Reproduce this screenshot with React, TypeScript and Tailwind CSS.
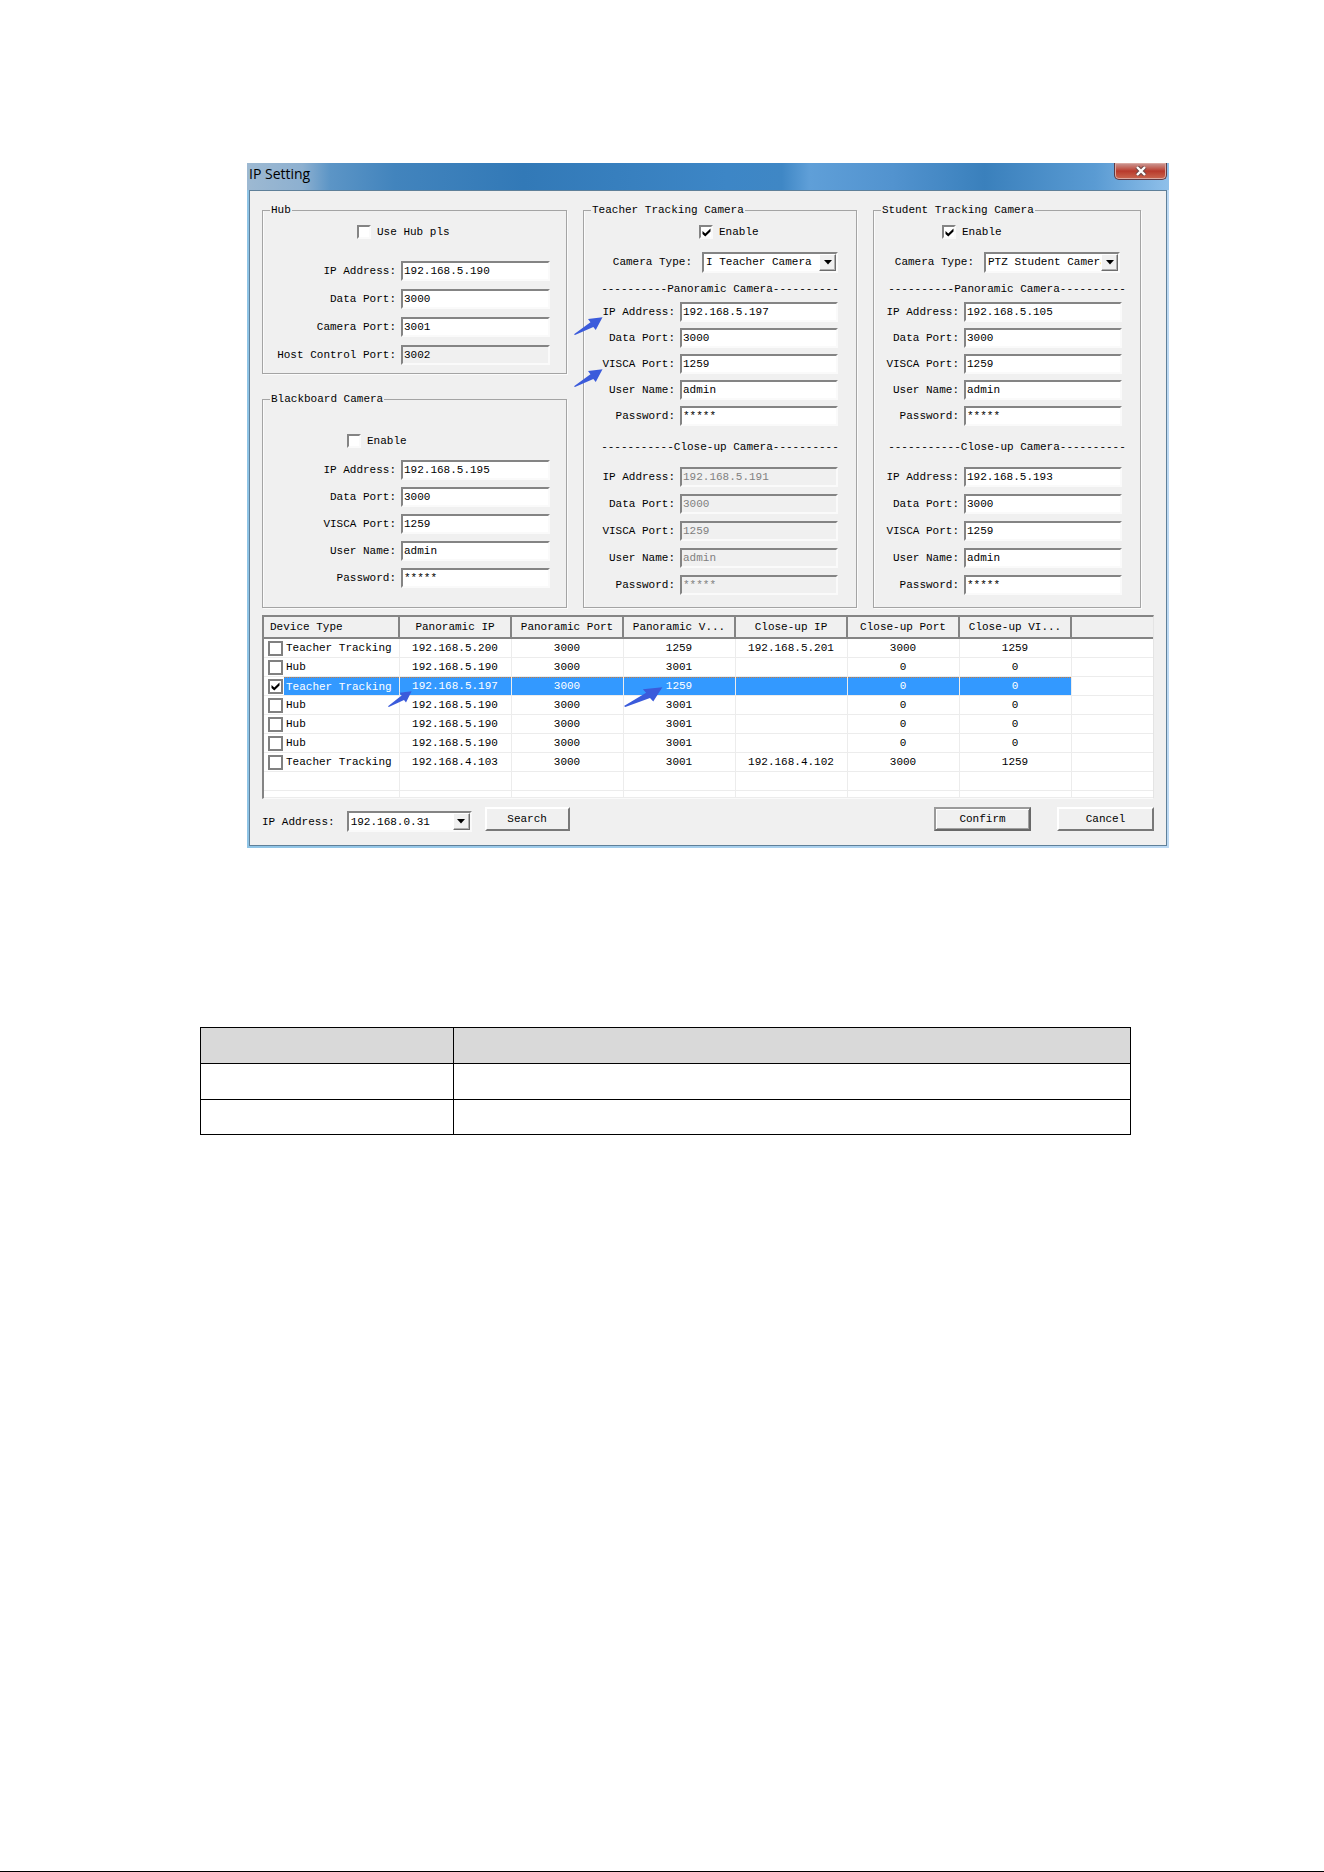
import React, { useId } from 'react';
import { clsx } from 'clsx';

interface Field {
  label: string;
  value: string;
  disabled?: boolean;
  readOnly?: boolean;
  arrow?: boolean;
}

interface Device {
  type: string;
  cells: string[];
  checked?: boolean;
}

const HUB_FIELDS: Field[] = [
  { label: 'IP Address:', value: '192.168.5.190' },
  { label: 'Data Port:', value: '3000' },
  { label: 'Camera Port:', value: '3001' },
  { label: 'Host Control Port:', value: '3002', readOnly: true },
];

// Every camera shares the same five fields
const cameraFields = (ip: string, disabled = false, arrows = false): Field[] => [
  { label: 'IP Address:', value: ip, disabled, arrow: arrows },
  { label: 'Data Port:', value: '3000', disabled },
  { label: 'VISCA Port:', value: '1259', disabled, arrow: arrows },
  { label: 'User Name:', value: 'admin', disabled },
  { label: 'Password:', value: '*****', disabled },
];

const COLUMNS = [
  'Panoramic IP',
  'Panoramic Port',
  'Panoramic V...',
  'Close-up IP',
  'Close-up Port',
  'Close-up VI...',
];

const DEVICES: Device[] = [
  { type: 'Teacher Tracking', cells: ['192.168.5.200', '3000', '1259', '192.168.5.201', '3000', '1259'] },
  { type: 'Hub', cells: ['192.168.5.190', '3000', '3001', '', '0', '0'] },
  { type: 'Teacher Tracking', cells: ['192.168.5.197', '3000', '1259', '', '0', '0'], checked: true },
  { type: 'Hub', cells: ['192.168.5.190', '3000', '3001', '', '0', '0'] },
  { type: 'Hub', cells: ['192.168.5.190', '3000', '3001', '', '0', '0'] },
  { type: 'Hub', cells: ['192.168.5.190', '3000', '3001', '', '0', '0'] },
  { type: 'Teacher Tracking', cells: ['192.168.4.103', '3000', '3001', '192.168.4.102', '3000', '1259'] },
];

const SUNKEN = 'border-2 border-t-[#848484] border-l-[#848484] border-r-[#fafafa] border-b-[#fafafa]';

const Arrow: React.FC<{ className: string }> = ({ className }) => (
  <svg viewBox="0 0 30 18" preserveAspectRatio="none" className={clsx('absolute z-10 pointer-events-none', className)}>
    <path d="M0 17.2 L17 5.2 L14.5 2 L29.5 0.3 L22.5 13 L20 10 L1 18 Z" fill="#3b5bdb" />
  </svg>
);

const CheckMark = () => (
  <svg viewBox="0 0 9 9" className="absolute inset-0 m-auto w-[9px] h-[9px] pointer-events-none">
    <path d="M0.5 3 L3.3 5.6 L8.5 0.6 V3.6 L3.3 8.6 L0.5 6 Z" fill="#000" />
  </svg>
);

const CheckRow: React.FC<{ label: string; checked?: boolean; className: string }> = ({ label, checked, className }) => (
  <label className={clsx('flex items-center gap-[6px] h-[14px]', className)}>
    <span className="relative w-[14px] h-[14px]">
      <input
        type="checkbox"
        defaultChecked={checked}
        className={clsx('block appearance-none w-[14px] h-[14px] bg-white', SUNKEN)}
      />
      {checked && <CheckMark />}
    </span>
    {label}
  </label>
);

const FieldList: React.FC<{ fields: Field[]; inputClass: string; className: string }> = ({
  fields,
  inputClass,
  className,
}) => {
  const id = useId();
  return (
    <div className={clsx('flex flex-col', className)}>
      {fields.map((field, i) => (
        <div key={field.label} className="flex items-center justify-end gap-[5px] h-5">
          <label htmlFor={`${id}-${i}`}>{field.label}</label>
          <div className="relative">
            <input
              id={`${id}-${i}`}
              type="text"
              defaultValue={field.value}
              disabled={field.disabled}
              readOnly={field.readOnly}
              className={clsx(
                'block h-5 px-px',
                SUNKEN,
                inputClass,
                field.disabled || field.readOnly ? 'bg-[#f0f0f0]' : 'bg-white',
                field.disabled ? 'text-[#808080]' : 'text-black'
              )}
            />
            {field.arrow && <Arrow className="right-[235px] top-[15px] w-[29px] h-[18px]" />}
          </div>
        </div>
      ))}
    </div>
  );
};

const Combo: React.FC<{ id: string; value: string; className: string }> = ({ id, value, className }) => (
  <div className={clsx('relative h-[21px]', className)}>
    <select id={id} className={clsx('block appearance-none w-full h-full pl-[2px] pr-[17px] bg-white', SUNKEN)}>
      <option>{value}</option>
    </select>
    <span className="absolute right-[2px] top-[2px] bottom-[2px] w-[17px] flex items-center justify-center bg-[#f0f0f0] border border-t-[#fff] border-l-[#fff] border-r-[#6d6d6d] border-b-[#6d6d6d] shadow-[inset_-1px_-1px_0_#b0b0b0] pointer-events-none">
      <svg viewBox="0 0 8 5" className="w-2 h-[5px]">
        <path d="M0 0 H8 L4 4.5 Z" fill="#000" />
      </svg>
    </span>
  </div>
);

const Group: React.FC<{ title: string; className?: string; children: React.ReactNode }> = ({
  title,
  className,
  children,
}) => (
  <fieldset
    className={clsx(
      'min-w-0 border border-[#a4a4a4] shadow-[1px_1px_0_#fbfbfb,inset_1px_0_0_#fbfbfb]',
      className
    )}
  >
    <legend className="ml-[7px] px-px leading-[14px] bg-[#f0f0f0]">{title}</legend>
    {children}
  </fieldset>
);

const TrackingCamera: React.FC<{
  title: string;
  type: string;
  checkClass: string;
  comboClass: string;
  panoramic: Field[];
  closeUp: Field[];
}> = ({ title, type, checkClass, comboClass, panoramic, closeUp }) => {
  const id = useId();
  return (
    <Group title={title} className="pt-2 pb-3">
      <CheckRow label="Enable" checked className={checkClass} />
      <div className={clsx('flex items-center justify-end gap-[10px] h-5 mt-[13px]', comboClass)}>
        <label htmlFor={id}>Camera Type:</label>
        <Combo id={id} value={type} className="w-[136px]" />
      </div>
      <div className="mt-[10px] text-center whitespace-nowrap">----------Panoramic Camera----------</div>
      <FieldList fields={panoramic} inputClass="w-[158px]" className="gap-[6px] mt-[6px] pr-[18px]" />
      <div className="mt-[14px] text-center whitespace-nowrap">-----------Close-up Camera----------</div>
      <FieldList fields={closeUp} inputClass="w-[158px]" className="gap-[7px] mt-[13px] pr-[18px]" />
    </Group>
  );
};

const DeviceTable = () => (
  <div className="mt-[7px] bg-white border-t-2 border-l-2 border-t-[#848484] border-l-[#848484] border-b border-r border-b-[#fafafa] border-r-[#e4e4e4]">
    <table className="w-full table-fixed border-collapse">
      <colgroup>
        <col className="w-[135px]" />
        {COLUMNS.map(column => (
          <col key={column} className="w-[112px]" />
        ))}
        <col />
      </colgroup>
      <thead>
        <tr className="h-[21px] bg-[#f0f0f0]">
          <th className="border-r-2 border-b-2 border-[#848484] pl-[6px] font-normal text-left">Device Type</th>
          {COLUMNS.map(column => (
            <th key={column} className="border-r-2 border-b-2 border-[#848484] font-normal text-center">
              {column}
            </th>
          ))}
          <th className="border-b-2 border-[#848484]" />
        </tr>
      </thead>
      <tbody>
        {DEVICES.map((device, row) => (
          <tr
            key={row}
            className={clsx('h-[19px] border-b border-[#ececec]', device.checked && 'text-white')}
          >
            <td className="border-r border-[#ececec]">
              <div className="flex items-center h-[18px] pl-1">
                <span className="relative w-[15px] h-[15px] shrink-0">
                  <input
                    type="checkbox"
                    aria-label={device.type}
                    defaultChecked={device.checked}
                    className="block appearance-none w-[15px] h-[15px] bg-white border-2 border-[#808080]"
                  />
                  {device.checked && <CheckMark />}
                </span>
                <span
                  className={clsx(
                    'flex items-center flex-1 h-full ml-px pl-[2px] whitespace-nowrap',
                    device.checked && 'bg-[#3399ff] border-t border-dotted border-[#c87a3a]'
                  )}
                >
                  {device.type}
                </span>
              </div>
            </td>
            {device.cells.map((cell, i) => (
              <td
                key={i}
                className={clsx(
                  'relative border-r border-[#ececec] text-center',
                  device.checked && 'bg-[#3399ff]'
                )}
              >
                {device.checked && (
                  <span className="absolute inset-x-0 top-0 border-t border-dotted border-[#c87a3a]" />
                )}
                {cell}
                {device.checked && i === 0 && <Arrow className="left-[-12px] top-[14px] w-6 h-4" />}
                {device.checked && i === 2 && <Arrow className="left-0 top-[10px] w-[39px] h-5" />}
              </td>
            ))}
            <td />
          </tr>
        ))}
        {['h-[19px]', 'h-[7px]'].map(height => (
          <tr key={height} className={clsx('border-b border-[#ececec]', height)}>
            <td className="border-r border-[#ececec]" />
            {COLUMNS.map(column => (
              <td key={column} className="border-r border-[#ececec]" />
            ))}
            <td />
          </tr>
        ))}
      </tbody>
    </table>
  </div>
);

const Footer = () => (
  <div className="flex items-start mt-2 h-[25px]">
    <div className="flex items-center gap-3 pt-1">
      <label htmlFor="host-ip">IP Address:</label>
      <Combo id="host-ip" value="192.168.0.31" className="w-[125px]" />
    </div>
    <button className="ml-[13px] w-[85px] h-6 pb-px bg-[#f0f0f0] border-2 border-t-[#fff] border-l-[#fff] border-r-[#787878] border-b-[#787878]">
      Search
    </button>
    <button className="ml-auto w-[97px] h-6 pb-px bg-[#f0f0f0] border-2 border-t-[#9a9a9a] border-l-[#9a9a9a] border-r-[#686868] border-b-[#686868] shadow-[inset_1px_1px_0_#fff,inset_-1px_-1px_0_#a0a0a0]">
      Confirm
    </button>
    <button className="ml-[26px] w-[97px] h-6 pb-px bg-[#f0f0f0] border-2 border-t-[#fff] border-l-[#fff] border-r-[#787878] border-b-[#787878]">
      Cancel
    </button>
  </div>
);

const IpSettingDialog = () => (
  <section className="bg-gradient-to-r from-[#8fc4e6] to-[#bcd9f3] px-[2px] pb-[2px] font-['Liberation_Mono',monospace] text-[11px] leading-[14px] text-black">
    {/* Title bar */}
    <header className="-mx-[2px] h-[27px] flex items-start justify-between bg-[linear-gradient(90deg,#9db9d2_0%,#8db0d0_6%,#5c95c6_9%,#4284bd_16%,#3279b7_30%,#3d86c6_52%,#3f87c5_58%,#5f9fd8_61%,#5293cf_70%,#3a80bc_80%,#5a9bd3_92%,#8fc0ea_100%)]">
      <h1 className="pl-[2px] pt-[3px] font-['Open_Sans','Noto_Sans',sans-serif] text-[14px] leading-[16px]">IP Setting</h1>
      <button
        aria-label="Close"
        className="mr-[2px] w-[53px] h-[17px] flex items-center justify-center rounded-b-[5px] border border-t-0 border-[#5d3a44] bg-gradient-to-b from-[#c99a98] via-[#b8392c] to-[#c9664f] shadow-[inset_0_0_0_1px_#dba9a2]"
      >
        <svg viewBox="0 0 12 10" className="w-3 h-[10px]">
          <path d="M2 1 L10 9 M10 1 L2 9" stroke="#6e4a4a" strokeWidth="4.4" />
          <path d="M2 1 L10 9 M10 1 L2 9" stroke="#fff" strokeWidth="2.4" />
        </svg>
      </button>
    </header>

    <div className="bg-[#f0f0f0] border border-[#5f8099] pt-[12px] pl-[12px] pr-[12px] pb-[13px]">
      <div className="grid grid-cols-[305fr_274fr_268fr] gap-4 pr-[13px]">
        <div className="flex flex-col gap-[18px] min-w-0">
          <Group title="Hub" className="pt-2 pb-2">
            <CheckRow label="Use Hub pls" className="pl-[94px]" />
            <FieldList fields={HUB_FIELDS} inputClass="w-[149px]" className="gap-2 mt-[22px] pr-4" />
          </Group>
          <Group title="Blackboard Camera" className="flex-1 pt-[28px]">
            <CheckRow label="Enable" className="pl-[84px]" />
            <FieldList
              fields={cameraFields('192.168.5.195')}
              inputClass="w-[149px]"
              className="gap-[7px] mt-3 pr-4"
            />
          </Group>
        </div>
        <TrackingCamera
          title="Teacher Tracking Camera"
          type="I Teacher Camera"
          checkClass="pl-[115px]"
          comboClass="pr-[18px]"
          panoramic={cameraFields('192.168.5.197', false, true)}
          closeUp={cameraFields('192.168.5.191', true)}
        />
        <TrackingCamera
          title="Student Tracking Camera"
          type="PTZ Student Camera"
          checkClass="pl-[68px]"
          comboClass="pr-[20px]"
          panoramic={cameraFields('192.168.5.105')}
          closeUp={cameraFields('192.168.5.193')}
        />
      </div>
      <DeviceTable />
      <Footer />
    </div>
  </section>
);

const BlankTable = () => (
  <table className="w-full table-fixed border-collapse">
    <colgroup>
      <col className="w-[253px]" />
      <col />
    </colgroup>
    <tbody>
      {['h-9 bg-[#d9d9d9]', 'h-9 bg-white', 'h-[35px] bg-white'].map((rowClass, i) => (
        <tr key={i} className={rowClass}>
          <td className="border border-black" />
          <td className="border border-black" />
        </tr>
      ))}
    </tbody>
  </table>
);

export default function App() {
  return (
    <main className="min-h-screen flex flex-col bg-white pt-[163px] border-b border-black">
      <div className="pl-[247px] pr-[155px]">
        <IpSettingDialog />
      </div>
      <div className="mt-[179px] pl-[200px] pr-[193px]">
        <BlankTable />
      </div>
    </main>
  );
}
